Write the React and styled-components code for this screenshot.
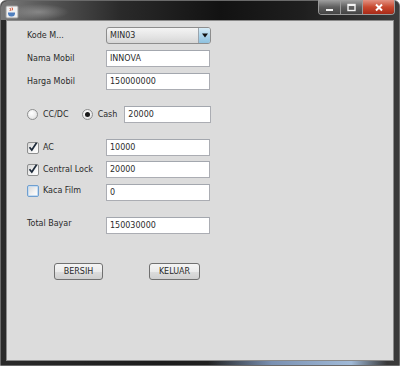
import styled, { createGlobalStyle } from 'styled-components';

const GlobalStyle = createGlobalStyle`
  body {
    margin: 0;
    background: #ffffff;
    font-family: "DejaVu Sans", "Liberation Sans", sans-serif;
  }
`;

const Window = styled.div`
  width: 400px;
  height: 366px;
  box-sizing: border-box;
  display: flex;
  flex-direction: column;
  padding: 0 5px 4px 5px;
  border: 1px solid #6a6a6a;
  border-radius: 6px 6px 0 0;
  background:
    linear-gradient(90deg, rgba(150, 180, 225, 0) 52%, rgba(150, 180, 225, 0.75) 68%, rgba(180, 210, 245, 0.85) 88%, rgba(150, 180, 225, 0) 97%) bottom / 100% 4px no-repeat,
    linear-gradient(90deg, #2a2a2a 0%, #1c1c1c 40%, #262626 70%, #3a3a3a 100%);
`;

const TitleBar = styled.div`
  height: 19px;
  display: flex;
  align-items: flex-start;
  justify-content: space-between;
  background:
    radial-gradient(ellipse 30px 8px at 38px 11px, rgba(170, 170, 170, 0.55), rgba(170, 170, 170, 0) 100%),
    linear-gradient(90deg, #7a7a7a 0%, #5a5a5a 10%, #2a2a2a 30%, #121212 55%, #1e1e1e 75%, #3c3c3c 100%);
  margin: 0 -5px;
  padding: 0 4px;
  border-radius: 6px 6px 0 0;
`;

const AppIcon = styled.div`
  margin-top: 3px;
  width: 14px;
  height: 14px;
`;

const WinButtons = styled.div`
  display: flex;
  height: 14px;
  margin-top: -1px;
  border: 1px solid #9a9a9a;
  border-top: none;
  border-radius: 0 0 4px 4px;
  overflow: hidden;
`;

const WinButton = styled.div`
  width: ${(p) => p.$w}px;
  height: 14px;
  display: flex;
  align-items: center;
  justify-content: center;
  border-left: ${(p) => (p.$first ? 'none' : '1px solid #9a9a9a')};
  background: ${(p) =>
    p.$close
      ? 'linear-gradient(180deg, #e39383 0%, #c8492f 50%, #a82a18 100%)'
      : 'linear-gradient(180deg, #a0a0a0 0%, #606060 50%, #444 100%)'};
`;

const Content = styled.div`
  flex: 1;
  background: #dcdcdc;
  border: 1px solid #8a8a8a;
  padding: 6px 0 0 20px;
  display: flex;
  flex-direction: column;
  color: #2b2b2b;
  font-size: 8px;
`;

const Row = styled.div`
  display: flex;
  align-items: center;
  height: 17px;
  margin-top: ${(p) => p.$mt || 0}px;
`;

const Label = styled.div`
  width: ${(p) => p.$w || 79}px;
  line-height: 17px;
  margin-top: ${(p) => p.$up || 0}px;
  white-space: nowrap;
`;

const Field = styled.div`
  width: ${(p) => p.$w || 104}px;
  height: 17px;
  box-sizing: border-box;
  background: #fff;
  border: 1px solid #abadb3;
  border-top-color: #a3a7ae;
  padding-left: 3px;
  line-height: 15px;
  color: #2b2b2b;
`;

const Combo = styled.div`
  width: 105px;
  height: 17px;
  box-sizing: border-box;
  display: flex;
  border: 1px solid #8d8d8d;
  border-radius: 3px;
  background: linear-gradient(180deg, #f4f4f4 0%, #e6e6e6 50%, #d6d6d6 100%);
  overflow: hidden;
`;

const ComboText = styled.div`
  flex: 1;
  padding-left: 3px;
  line-height: 15px;
`;

const ComboArrow = styled.div`
  width: 11px;
  display: flex;
  align-items: center;
  justify-content: center;
  border-left: 1px solid #9aa4ad;
  background: linear-gradient(180deg, #d7ecf7 0%, #a9d2ea 55%, #8fc1df 100%);
`;

const Choice = styled.div`
  display: flex;
  align-items: center;
  margin-right: ${(p) => p.$mr || 0}px;
`;

const Radio = styled.div`
  width: 11px;
  height: 11px;
  box-sizing: border-box;
  border-radius: 50%;
  border: 1px solid #8e8f8f;
  background: radial-gradient(circle at 40% 35%, #ffffff 0%, #eaeaea 60%, #cfcfcf 100%);
  display: flex;
  align-items: center;
  justify-content: center;
  margin-right: 5px;
`;

const Dot = styled.div`
  width: 5px;
  height: 5px;
  border-radius: 50%;
  background: #1a1a1a;
`;

const Check = styled.div`
  width: 12px;
  height: 12px;
  box-sizing: border-box;
  border: 1px solid ${(p) => (p.$focus ? '#6f9fd0' : '#8e8f8f')};
  border-radius: 2px;
  background: linear-gradient(135deg, #d6d6d6 0%, #f4f4f4 60%, #ffffff 100%);
  box-shadow: ${(p) => (p.$focus ? 'inset 0 0 0 1px #c5dcf2' : 'none')};
  margin-right: 4px;
  position: relative;
`;

const Button = styled.div`
  width: ${(p) => p.$w}px;
  height: 17px;
  box-sizing: border-box;
  border: 1px solid #707070;
  border-radius: 3px;
  background: linear-gradient(180deg, #f4f4f4 0%, #ebebeb 50%, #dddddd 51%, #cfcfcf 100%);
  text-align: center;
  line-height: 15px;
  margin-left: ${(p) => p.$ml || 0}px;
`;

const CheckMark = () => (
  <svg width="12" height="12" viewBox="0 0 12 12" style={{ position: 'absolute', left: -1, top: -2 }}>
    <path d="M2.5 6.2 L4.8 9 L9.6 1.8" fill="none" stroke="#1d2a3a" strokeWidth="1.7" />
  </svg>
);

function App() {
  return (
    <>
      <GlobalStyle />
      <Window>
        <TitleBar>
          <AppIcon>
            <svg width="14" height="14" viewBox="0 0 14 14">
              <rect x="1" y="1" width="12" height="12" rx="1" fill="#f1f1f1" stroke="#9a9a9a" />
              <path d="M5 3 q1 1.5 0 3 M7 2.5 q1 1.5 0 3" stroke="#d04b2b" strokeWidth="1" fill="none" />
              <path d="M3 7.5 h7 v1.5 a3 3 0 0 1 -3 2.5 h-1 a3 3 0 0 1 -3 -2.5 z" fill="#4f7fbf" />
            </svg>
          </AppIcon>
          <WinButtons>
            <WinButton $w={21} $first>
              <svg width="9" height="9" viewBox="0 0 9 9">
                <rect x="1" y="6" width="7" height="2" fill="#f4f4f4" />
              </svg>
            </WinButton>
            <WinButton $w={21}>
              <svg width="9" height="9" viewBox="0 0 9 9">
                <rect x="1" y="1.5" width="7" height="6" fill="none" stroke="#f4f4f4" strokeWidth="1.4" />
                <rect x="1" y="1" width="7" height="2" fill="#f4f4f4" />
              </svg>
            </WinButton>
            <WinButton $w={31} $close>
              <svg width="10" height="9" viewBox="0 0 10 9">
                <path d="M2 1.5 L8 7.5 M8 1.5 L2 7.5" stroke="#ffffff" strokeWidth="2" />
              </svg>
            </WinButton>
          </WinButtons>
        </TitleBar>
        <Content>
          <Row>
            <Label>Kode M...</Label>
            <Combo>
              <ComboText>MIN03</ComboText>
              <ComboArrow>
                <svg width="6" height="5" viewBox="0 0 6 5">
                  <path d="M0 0.5 H6 L3 4.5 Z" fill="#111" />
                </svg>
              </ComboArrow>
            </Combo>
          </Row>
          <Row $mt={6}>
            <Label>Nama Mobil</Label>
            <Field>INNOVA</Field>
          </Row>
          <Row $mt={6}>
            <Label>Harga Mobil</Label>
            <Field>150000000</Field>
          </Row>
          <Row $mt={16}>
            <Choice $mr={13}>
              <Radio />
              CC/DC
            </Choice>
            <Choice $mr={7}>
              <Radio>
                <Dot />
              </Radio>
              Cash
            </Choice>
            <Field $w={87}>20000</Field>
          </Row>
          <Row $mt={16}>
            <Label>
              <Choice>
                <Check>
                  <CheckMark />
                </Check>
                AC
              </Choice>
            </Label>
            <Field>10000</Field>
          </Row>
          <Row $mt={5}>
            <Label>
              <Choice>
                <Check>
                  <CheckMark />
                </Check>
                Central Lock
              </Choice>
            </Label>
            <Field>20000</Field>
          </Row>
          <Row $mt={6}>
            <Label $up={-4}>
              <Choice>
                <Check $focus />
                Kaca Film
              </Choice>
            </Label>
            <Field>0</Field>
          </Row>
          <Row $mt={16}>
            <Label $up={-5}>Total Bayar</Label>
            <Field>150030000</Field>
          </Row>
          <Row $mt={29}>
            <Button $w={49} $ml={27}>BERSIH</Button>
            <Button $w={51} $ml={46}>KELUAR</Button>
          </Row>
        </Content>
      </Window>
    </>
  );
}

export default App;
